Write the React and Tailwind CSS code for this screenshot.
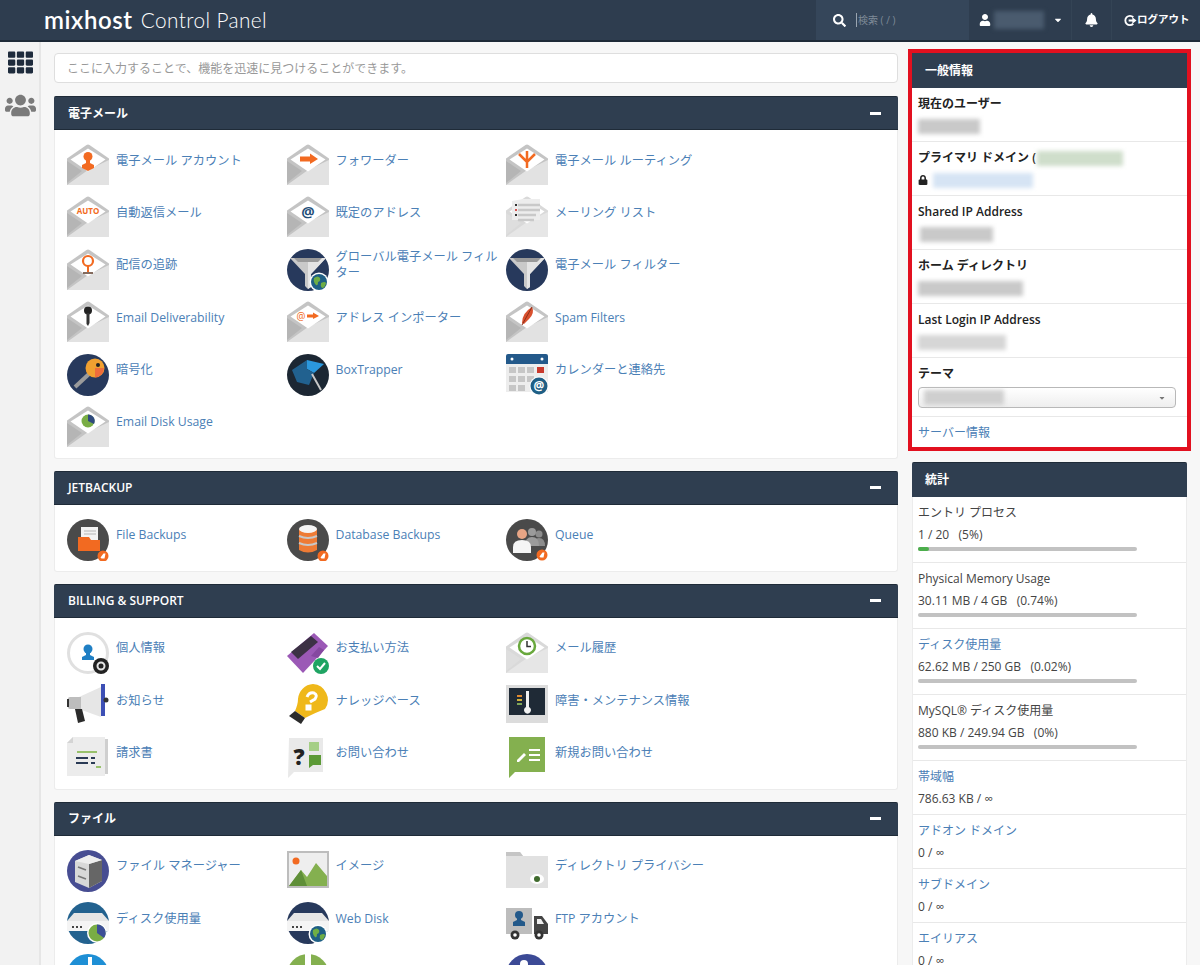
import { FaBell, FaCaretDown, FaLock, FaSearch, FaTh, FaUser, FaUsers } from 'react-icons/fa';

const ORANGE = '#f26a21';
const NAVY = '#27395c';

function Svg({ children }) {
  return <svg viewBox="0 0 42 42" className="w-[42px] h-[42px] shrink-0 block">{children}</svg>;
}

function Envelope({ children, light }) {
  return (
    <Svg>
      <path d="M19.500 1 Q21 0 22.500 1 L42 14.500 V41 H0 V14.500Z" fill={light ? '#d9d9d9' : '#c4c4c4'} />
      <path d="M0 17 L15 27 L0 39Z" fill={light ? '#dedede' : '#b5b5b5'} />
      <path d="M0 41 L21 26 L42 16 V41Z" fill={light ? '#e6e6e6' : '#e2e2e2'} />
      <path d="M21 4.500 L38.500 15.500 L21 27.500 L3.500 15.500Z" fill="#fff" />
      {children}
    </Svg>
  );
}

function Globe({ cx = 32, cy = 33, r = 8 }) {
  return (
    <g>
      <circle cx={cx} cy={cy} r={r + 1.500} fill="#fff" />
      <circle cx={cx} cy={cy} r={r} fill="#1f5f85" />
      <path d={`M${cx - 5} ${cy - 4} q4 -3 6 0 q1 3 -2 4 q0 4 -2 3 q-3 -3 -2 -7Z M${cx + 2} ${cy + 1} q4 -2 5 0 q-1 5 -4 5 q-2 -2 -1 -5Z`} fill="#6fae45" />
    </g>
  );
}

function Funnel({ globe }) {
  return (
    <Svg>
      <circle cx="21" cy="21" r="21" fill={NAVY} />
      <path d="M3 9 H39 L24 25 V38 L21 40 L18 37 V25Z" fill="#c9c9c9" />
      <path d="M21 9 H39 L24 25 V38 L21 40Z" fill="#e4e4e4" />
      <path d="M7 9 H35 L31 13 H11Z" fill="#9a9a9a" />
      {globe && <Globe />}
    </Svg>
  );
}

function Badge({ cx = 36, cy = 37 }) {
  return (
    <g>
      <circle cx={cx} cy={cy} r="5.500" fill={ORANGE} />
      <path d={`M${cx - 2.500} ${cy + 1.500} l3 -4 h2 l-1 5 h-3Z`} fill="#fff" />
    </g>
  );
}

function Server({ bg, children }) {
  return (
    <Svg>
      <circle cx="21" cy="21" r="21" fill={bg} />
      <path d="M0 19 L7 11 H35 L42 19 V29 H0Z" fill="#e6e6e6" />
      <path d="M0 19 H42 V29 H0Z" fill="#f4f4f4" />
      <path d="M5 24 h2 v2 h-2Z M9 24 h2 v2 h-2Z M13 24 h2 v2 h-2Z" fill="#444" />
      {children}
    </Svg>
  );
}

const icons = {
  account: <Envelope><circle cx="21" cy="12.500" r="4.500" fill={ORANGE} /><path d="M19 15 h4 v4 l4 2 v3 l-6 3 l-6 -3 v-3 l4 -2Z" fill={ORANGE} /></Envelope>,
  forwarder: <Envelope><path d="M13 12.500 H23 V9.500 L31 15 L23 20 V17.500 H13Z" fill={ORANGE} /></Envelope>,
  routing: <Envelope><path d="M21 7 V24 M13 10 L21 18 L29 10" stroke={ORANGE} strokeWidth="2.500" fill="none" /></Envelope>,
  auto: <Envelope><text x="21" y="18" textAnchor="middle" fontSize="8" fontWeight="700" fill={ORANGE} fontFamily="Open Sans">AUTO</text></Envelope>,
  at: <Envelope><text x="21" y="21" textAnchor="middle" fontSize="15" fontWeight="700" fill="#1f4e79" fontFamily="Open Sans">@</text></Envelope>,
  list: (
    <Envelope light>
      <path d="M6 5 L17 3 H34 V24 H6Z" fill="#ededed" />
      <path d="M12 9 H34 M12 14 H34 M12 19 H30 M12 24 H28" stroke="#c9c9c9" strokeWidth="2.500" />
      <path d="M9 8 h2 v2 h-2Z M9 18 h2 v2 h-2Z" fill="#333" />
      <path d="M9 13 h2 v2 h-2Z" fill="#d9534f" />
    </Envelope>
  ),
  track: <Envelope><circle cx="21" cy="12" r="5" fill="#fff" stroke={ORANGE} strokeWidth="2.200" /><path d="M21 17 V23" stroke={ORANGE} strokeWidth="2" /><path d="M16 24 H26" stroke="#5b3a29" strokeWidth="1.500" /></Envelope>,
  globalFilter: <Funnel globe />,
  filter: <Funnel />,
  key: <Envelope><circle cx="21" cy="9.500" r="4" fill="#222" /><path d="M19.500 12 h3 V22 L21 25 L19.500 23Z" fill="#333" /></Envelope>,
  importer: (
    <Envelope>
      <text x="14" y="19" textAnchor="middle" fontSize="10" fill={ORANGE} fontFamily="Open Sans">@</text>
      <path d="M20 13.500 H26 V11.500 L32 15 L26 18 V16.500 H20Z" fill={ORANGE} />
    </Envelope>
  ),
  spam: <Envelope><path d="M26 6 Q29 12 23 18 L18 23 L16 22 Q16 12 26 6Z" fill="#d9502e" /><path d="M26 6 L16 24" stroke="#8c2f1a" strokeWidth="1" /></Envelope>,
  crypt: (
    <Svg>
      <circle cx="21" cy="21" r="21" fill={NAVY} />
      <path d="M8 33 L22 20" stroke="#9b9b9b" strokeWidth="4" />
      <circle cx="28" cy="14" r="9.500" fill="#f0a030" />
      <path d="M28 14 L37 14 A9.500 9.500 0 0 1 28 23.500Z" fill="#ee6c3b" />
      <circle cx="31" cy="11" r="2" fill="#222" />
    </Svg>
  ),
  boxtrapper: (
    <Svg>
      <circle cx="21" cy="21" r="21" fill="#1c2733" />
      <path d="M20 6 L37 10 L27 19 L20 15Z" fill="#2b98dd" />
      <path d="M5 16 L20 6 L20 15 L27 19 L22 31 L10 28Z" fill="#21618f" />
      <path d="M25 20 L34 36" stroke="#c8c8c8" strokeWidth="2" />
    </Svg>
  ),
  calendar: (
    <Svg>
      <path d="M2 0 H40 Q42 0 42 2 V10 H0 V2 Q0 0 2 0Z" fill="#23598a" />
      <path d="M0 10 H42 V38 H0Z" fill="#ededed" />
      <path d="M3 13 h7 v6 h-7Z M12 13 h7 v6 h-7Z M21 13 h7 v6 h-7Z M3 22 h7 v6 h-7Z M12 22 h7 v6 h-7Z M21 22 h7 v6 h-7Z M3 31 h7 v6 h-7Z M12 31 h7 v6 h-7Z" fill="#c6c6c6" />
      <path d="M31 13 h7 v6 h-7Z" fill="#c9392c" />
      <circle cx="6" cy="5" r="1.500" fill="#fff" /><circle cx="36" cy="5" r="1.500" fill="#fff" />
      <circle cx="33" cy="32" r="9.500" fill="#fff" /><circle cx="33" cy="32" r="8.500" fill="#1f5f85" />
      <text x="33" y="36" textAnchor="middle" fontSize="12" fontWeight="700" fill="#fff" fontFamily="Open Sans">@</text>
    </Svg>
  ),
  diskUsage: <Envelope><circle cx="21" cy="15" r="6.500" fill="#79ad45" /><path d="M21 15 V8.500 A6.500 6.500 0 0 1 27 18Z" fill="#2f4a7d" /></Envelope>,
  fileBackup: (
    <Svg>
      <circle cx="21" cy="21" r="21" fill="#4a4a4a" />
      <path d="M14 8 H31 V22 H14Z" fill="#f3f3f3" />
      <path d="M17 12 H29 M17 15 H29" stroke="#b5b5b5" />
      <path d="M11 18 H22 L24 21 H33 V32 H11Z" fill={ORANGE} />
      <Badge />
    </Svg>
  ),
  dbBackup: (
    <Svg>
      <circle cx="21" cy="21" r="21" fill="#4a4a4a" />
      <path d="M12 10 H30 V31 Q21 36 12 31Z" fill="#ee7b35" />
      <ellipse cx="21" cy="10" rx="9" ry="4" fill="#f5f5f5" />
      <path d="M12 17 Q21 21 30 17 M12 24 Q21 28 30 24" stroke="#c8c8c8" strokeWidth="2" fill="none" />
      <Badge />
    </Svg>
  ),
  queue: (
    <Svg>
      <circle cx="21" cy="21" r="21" fill="#4a4a4a" />
      <circle cx="33" cy="15" r="3.500" fill="#8c8c8c" /><path d="M27 27 Q27 19 33 19 Q39 19 39 27Z" fill="#8c8c8c" />
      <circle cx="26" cy="13" r="4" fill="#9b9b9b" /><path d="M19 27 Q19 18 26 18 Q33 18 33 27Z" fill="#9b9b9b" />
      <circle cx="16" cy="15" r="5" fill="#e8a585" /><path d="M7 34 V28 Q7 21 16 21 Q25 21 25 28 V34Z" fill="#f5f5f5" />
      <Badge cx={36} cy={36} />
    </Svg>
  ),
  personal: (
    <Svg>
      <circle cx="21" cy="21" r="19.500" fill="#fff" stroke="#e0e0e0" strokeWidth="3" />
      <circle cx="21" cy="17" r="4.500" fill="#1f7fc4" />
      <path d="M19 20 h4 v3 l4 2 v3 h-12 v-3 l4 -2Z" fill="#1f7fc4" />
      <circle cx="34" cy="34" r="8" fill="#222" />
      <circle cx="34" cy="34" r="3.500" fill="none" stroke="#e4e4e4" strokeWidth="2" />
    </Svg>
  ),
  payment: (
    <Svg>
      <path d="M0 24 L27 1 L41 14 L16 41Z" fill="#9b59b6" />
      <path d="M4 20 L24 4 L31 10 L11 27Z" fill="#3c3145" />
      <path d="M24 24 L32 15 L37 18 L31 26Z" fill="#8548a0" />
      <circle cx="34" cy="34" r="8" fill="#1fa463" />
      <path d="M30 34 l3 3 l5 -6" stroke="#fff" strokeWidth="2" fill="none" />
    </Svg>
  ),
  mailHistory: (
    <Envelope light>
      <circle cx="21" cy="14" r="8" fill="#fff" stroke="#69a83d" strokeWidth="2.500" />
      <path d="M21 9 V14.500 H25" stroke="#333" strokeWidth="1.500" fill="none" />
    </Envelope>
  ),
  news: (
    <Svg>
      <path d="M4 13 H12 L34 3 V33 L12 25 H4Z" fill="#e6e6e6" />
      <path d="M1 15 Q1 13 3 13 H14 V25 H3 Q1 25 1 23Z" fill="#bdbdbd" />
      <path d="M0 15 h2 v8 h-2Z" fill="#333" />
      <path d="M8 25 H15 L18 37 L11 39Z" fill="#2b2b2b" />
      <path d="M34 0 h4 v32 h-4Z" fill="#3d4fb5" />
      <circle cx="39" cy="16" r="2.500" fill="#333" />
    </Svg>
  ),
  knowledge: (
    <Svg>
      <path d="M26 0 A16 16 0 0 1 38 25 Q30 28 18 34 L8 27 Q11 20 11 15 A16 16 0 0 1 26 0Z" fill="#efb81a" />
      <path d="M20 13 Q22 8 27 9 Q31 11 28 15 L23 18 M20 22 h3 v3 h-3Z" stroke="#fff" strokeWidth="3" fill="none" />
      <path d="M8 27 L18 34 L14 40 L2 32Z" fill="#2b2b2b" />
    </Svg>
  ),
  status: (
    <Svg>
      <path d="M0 1 H42 V39 H0Z" fill="#dcdcdc" />
      <path d="M3 4 H39 V31 H3Z" fill="#1f2a36" />
      <path d="M20 7 h3 v16 a3.500 3.500 0 1 1 -3 0Z" fill="#f2f2f2" />
      <path d="M11 11 h5 v2 h-5Z" fill="#e0892e" /><path d="M11 15 h5 v2 h-5Z" fill="#d1b23a" /><path d="M11 19 h5 v2 h-5Z" fill="#7fa65a" />
    </Svg>
  ),
  invoice: (
    <Svg>
      <path d="M6 0 H38 V39 H0 V6Z" fill="#ececec" />
      <path d="M38 2 h3 v35 h-3Z" fill="#cfcfcf" />
      <path d="M0 6 H6 V0Z" fill="#d4d4d4" />
      <path d="M10 15 H30" stroke="#7cb342" strokeWidth="1.500" />
      <path d="M9 21 H21 M9 26 H21 M24 21 H28 M24 26 H28" stroke="#2a3a55" strokeWidth="2" />
      <path d="M29 30 H34" stroke="#7cb342" strokeWidth="1.500" />
    </Svg>
  ),
  question: (
    <Svg>
      <path d="M2 1 H36 V35 H7 L1 41Z" fill="#e9e9e9" />
      <text x="12" y="28" textAnchor="middle" fontSize="22" fontWeight="800" fill="#222" fontFamily="Open Sans">?</text>
      <path d="M22 5 H32 V14 H22Z" fill="#a5cf86" />
      <path d="M22 18 H34 V28 H26 L22 31Z" fill="#5c9a36" />
    </Svg>
  ),
  ticket: (
    <Svg>
      <path d="M3 0 H39 V35 H9 L3 41Z" fill="#84b04f" />
      <path d="M11 23 L18 16 L20 18 L13 25 H11Z" fill="#fff" />
      <path d="M23 13 H34 M23 18 H34 M23 23 H34" stroke="#fff" strokeWidth="2.200" />
    </Svg>
  ),
  fileManager: (
    <Svg>
      <circle cx="21" cy="21" r="21" fill="#474d92" />
      <path d="M8 11 L22 5 L35 10 V31 L22 38 L8 32Z" fill="#d8d8d8" />
      <path d="M22 14 L35 10 V31 L22 38Z" fill="#666" />
      <path d="M8 11 L22 5 L35 10 L22 14Z" fill="#eee" />
      <path d="M11 17 L19 20 M11 26 L19 29" stroke="#777" strokeWidth="1.500" />
    </Svg>
  ),
  image: (
    <Svg>
      <path d="M0 1 H42 V38 H0Z" fill="#bdbdbd" />
      <path d="M2 3 H40 V36 H2Z" fill="#eeeeee" />
      <circle cx="9" cy="11" r="3.500" fill="#f26a21" />
      <path d="M2 36 L14 20 L20 27 L29 13 L40 26 V36Z" fill="#84b04f" />
      <path d="M2 36 L14 20 L20 36Z" fill="#5f8f38" />
    </Svg>
  ),
  privacy: (
    <Svg>
      <path d="M0 2 H14 L17 6 H42 V38 H0Z" fill="#e1e1e1" />
      <path d="M0 2 H14 L17 6 H0Z" fill="#c5c5c5" />
      <ellipse cx="31" cy="29" rx="7" ry="5" fill="#fff" />
      <circle cx="31" cy="29" r="3" fill="#3f6a2d" />
    </Svg>
  ),
  disk: <Server bg="#23628f"><circle cx="30" cy="31" r="10" fill="#fff" /><circle cx="30" cy="31" r="8.500" fill="#79ad45" /><path d="M30 31 V22.500 A8.500 8.500 0 0 1 37 36Z" fill="#3c4f96" /></Server>,
  webDisk: <Server bg={NAVY}><Globe cx={31} cy={32} r={8} /></Server>,
  ftp: (
    <Svg>
      <path d="M0 6 H26 V32 H0Z" fill="#bdbdbd" />
      <circle cx="13" cy="13" r="4" fill="#23598a" />
      <path d="M11 16 h4 v2 l4 2 v4 h-12 v-4 l4 -2Z" fill="#23598a" />
      <path d="M28 14 H36 L42 22 V32 H28Z" fill="#444" />
      <path d="M31 17 H35 L38 22 H31Z" fill="#eee" />
      <circle cx="9" cy="33" r="4.500" fill="#333" /><circle cx="9" cy="33" r="1.800" fill="#fff" />
      <circle cx="33" cy="33" r="4.500" fill="#333" /><circle cx="33" cy="33" r="1.800" fill="#fff" />
    </Svg>
  ),
  backup: <Svg><circle cx="21" cy="21" r="21" fill="#1e8fd5" /><path d="M21 3 h4 v8 h-4Z" fill="#fff" /></Svg>,
  ssh: <Svg><circle cx="21" cy="21" r="21" fill="#84b04f" /><path d="M18 0 h6 v14 h-6Z" fill="#fff" /></Svg>,
  git: <Svg><circle cx="21" cy="21" r="21" fill="#3c4a96" /><circle cx="18" cy="10" r="4" fill="#fff" /></Svg>,
};

const sections = [
  {
    title: '電子メール',
    items: [
      ['電子メール アカウント', 'account'], ['フォワーダー', 'forwarder'], ['電子メール ルーティング', 'routing'],
      ['自動返信メール', 'auto'], ['既定のアドレス', 'at'], ['メーリング リスト', 'list'],
      ['配信の追跡', 'track'], ['グローバル電子メール フィルター', 'globalFilter'], ['電子メール フィルター', 'filter'],
      ['Email Deliverability', 'key'], ['アドレス インポーター', 'importer'], ['Spam Filters', 'spam'],
      ['暗号化', 'crypt'], ['BoxTrapper', 'boxtrapper'], ['カレンダーと連絡先', 'calendar'],
      ['Email Disk Usage', 'diskUsage'],
    ],
  },
  {
    title: 'JETBACKUP',
    items: [['File Backups', 'fileBackup'], ['Database Backups', 'dbBackup'], ['Queue', 'queue']],
  },
  {
    title: 'BILLING & SUPPORT',
    items: [
      ['個人情報', 'personal'], ['お支払い方法', 'payment'], ['メール履歴', 'mailHistory'],
      ['お知らせ', 'news'], ['ナレッジベース', 'knowledge'], ['障害・メンテナンス情報', 'status'],
      ['請求書', 'invoice'], ['お問い合わせ', 'question'], ['新規お問い合わせ', 'ticket'],
    ],
  },
  {
    title: 'ファイル',
    items: [
      ['ファイル マネージャー', 'fileManager'], ['イメージ', 'image'], ['ディレクトリ プライバシー', 'privacy'],
      ['ディスク使用量', 'disk'], ['Web Disk', 'webDisk'], ['FTP アカウント', 'ftp'],
      ['', 'backup'], ['', 'ssh'], ['', 'git'],
    ],
  },
];

// redacted values in the reference are blurred smudges
function Smudge({ width, color = 'bg-[#c9c9c9]', className = '' }) {
  return <div style={{ width }} className={`h-[15px] blur-[2px] ${color} ${className}`} />;
}

function Section({ title, items }) {
  return (
    <section className="mb-[11.600px] bg-white border-x border-b border-[#ececec] rounded-b-[3px]">
      <div className="-mx-px h-[34px] flex items-center justify-between pl-[14px] pr-[17px] bg-[#2f3e50] border-y border-[#1f2b38] rounded-t-[2px] text-white text-[12px] font-semibold">
        <span className="pt-px">{title}</span>
        <span className="w-[11px] h-[3px] bg-white" />
      </div>
      <div className="pl-[12px] pt-[14px] grid grid-cols-[repeat(3,219.500px)] auto-rows-[52.400px]">
        {items.map(([label, icon]) => (
          <a key={icon} className="flex items-start gap-[7px] text-[#4b80b6] text-[12.250px] leading-[16px]">
            {icons[icon]}
            <span className="h-[33px] w-[165px] flex items-center">{label}</span>
          </a>
        ))}
      </div>
    </section>
  );
}

function InfoRow({ label, children, last }) {
  return (
    <div className={`px-[6px] pt-[6px] pb-[5px] ${last ? '' : 'border-b border-[#e8e8e8]'}`}>
      <div className="h-[20px] leading-[20px] font-semibold text-[#222]">{label}</div>
      <div className="mt-[2px] h-[20px] flex items-center">{children}</div>
    </div>
  );
}

function Bar({ percent }) {
  return (
    <div className="mt-[2px] mb-[11px] w-[219px] h-[4px] rounded-sm bg-[#c2c2c2]">
      {percent > 0 && <div style={{ width: `${percent}%` }} className="h-full rounded-sm bg-[#4cae4c]" />}
    </div>
  );
}

function StatRow({ label, value, link, percent }) {
  const hasBar = percent !== undefined;
  return (
    <div className={`px-[5px] pt-[6px] border-b border-[#e8e8e8] ${hasBar ? '' : 'pb-[5px]'}`}>
      <div className={`h-[20px] leading-[20px] ${link ? 'text-[#4b80b6]' : 'text-[#444]'}`}>{label}</div>
      <div className="mt-[2px] h-[20px] leading-[20px] text-[#444] whitespace-pre">{value}</div>
      {hasBar && <Bar percent={percent} />}
    </div>
  );
}

export default function App() {
  return (
    <div className="w-[1200px] h-[965px] overflow-hidden bg-[#f7f7f7] font-['Open_Sans','Noto_Sans_CJK_JP',sans-serif] text-[12px]">
      <header className="h-[42px] flex bg-[#2e3d4f] border-b-2 border-[#1e2a38] text-white">
        <div className="w-[816px] pl-[44px] flex items-center whitespace-nowrap">
          <span className="font-['Lato',sans-serif] text-[24px] font-semibold leading-none tracking-[0.6px]">mixhost</span>
          <span className="ml-[8px] font-['Lato',sans-serif] text-[20.800px] font-light leading-none tracking-[0.4px]">Control Panel</span>
        </div>
        <div className="w-[153px] bg-[#35465a] flex items-center pl-[17px]">
          <FaSearch className="w-[13px] h-[13px]" />
          <span className="ml-[10px] w-px h-[14px] bg-[#9aa5b1]" />
          <span className="ml-px text-[10px] text-[#7f8b98]">検索 ( / )</span>
        </div>
        <div className="w-[103px] flex items-center pl-[10px] border-r border-[#344455]">
          <FaUser className="w-[12px] h-[12px]" />
          <div className="ml-[3px] w-[50px] h-[18px] bg-[#4a5b6e] blur-[2px]" />
          <FaCaretDown className="ml-[9px] w-[10px] h-[10px]" />
        </div>
        <div className="w-[40px] flex items-center justify-center border-r border-[#344455]">
          <FaBell className="w-[13px] h-[14px]" />
        </div>
        <div className="flex-1 flex items-center pl-[12px] text-[10.500px] font-semibold">
          <svg viewBox="0 0 14 14" className="w-[13px] h-[13px]">
            <path d="M10 3.500 A5 5 0 1 0 10 10.500" stroke="#fff" strokeWidth="2" fill="none" />
            <path d="M5 5.800 H9 V3.500 L13.500 7 L9 10.500 V8.200 H5Z" fill="#fff" />
          </svg>
          <span>ログアウト</span>
        </div>
      </header>

      <div className="flex">
        <aside className="w-[41px] h-[923px] shrink-0 flex flex-col items-center pt-[8px] pl-[2px] bg-[#f2f2f2] border-r-2 border-[#e6e6e6]">
          <FaTh className="w-[25px] h-[25px] text-[#1e2b3c]" />
          <FaUsers className="mt-[14.500px] w-[31px] h-[31px] text-[#7a7a7a]" />
        </aside>

        <main className="w-[844px] ml-[13px] pt-[11px] shrink-0">
          <div className="h-[30px] mb-[13px] flex items-center pl-[12px] pt-px bg-white border border-[#dedede] rounded-[4px] text-[#999]">
            ここに入力することで、機能を迅速に見つけることができます。
          </div>
          {sections.map((s) => <Section key={s.title} {...s} />)}
        </main>

        <div className="w-[275px] ml-[14px] pt-[11px] shrink-0">
          <section className="bg-white outline-4 outline-[#e2101f]">
            <div className="h-[35px] flex items-center pl-[13px] bg-[#2f3e50] text-white font-semibold">一般情報</div>
            <InfoRow label="現在のユーザー"><Smudge width={62} /></InfoRow>
            <div className="px-[6px] pt-[6px] pb-[5px] border-b border-[#e8e8e8]">
              <div className="h-[20px] leading-[20px] font-semibold text-[#222] flex items-center">
                プライマリ ドメイン (
                <Smudge width={86} color="bg-[#cfdecb]" className="ml-px" />
              </div>
              <div className="mt-[2px] h-[20px] flex items-center">
                <FaLock className="w-[10px] h-[10px] text-[#222]" />
                <Smudge width={100} color="bg-[#d6e4f4]" className="ml-[5px]" />
              </div>
            </div>
            <InfoRow label="Shared IP Address"><Smudge width={73} className="ml-[2px]" /></InfoRow>
            <InfoRow label="ホーム ディレクトリ"><Smudge width={105} /></InfoRow>
            <InfoRow label="Last Login IP Address"><Smudge width={88} color="bg-[#d6d6d6]" /></InfoRow>
            <div className="px-[6px] pt-[6px] pb-[8px] border-b border-[#e8e8e8]">
              <div className="h-[20px] leading-[20px] font-semibold text-[#222]">テーマ</div>
              <div className="mt-[3px] w-[258px] h-[21px] flex items-center justify-between pl-[5px] pr-[9px] rounded-[4px] border border-[#b8b8b8] bg-linear-to-b from-white to-[#eeeeee]">
                <Smudge width={80} color="bg-[#cfcfcf]" />
                <FaCaretDown className="w-[8px] h-[8px] text-[#777]" />
              </div>
            </div>
            <div className="h-[30px] flex items-center px-[6px] pt-px text-[#4b80b6]">サーバー情報</div>
          </section>

          <section className="mt-[15px] bg-white border-x border-[#ececec]">
            <div className="-mx-px h-[35px] flex items-center pl-[13px] bg-[#2f3e50] border-t border-[#1f2b38] rounded-t-[2px] text-white font-semibold">統計</div>
            <StatRow label="エントリ プロセス" value="1 / 20   (5%)" percent={5} />
            <StatRow label="Physical Memory Usage" value="30.11 MB / 4 GB   (0.74%)" percent={0} />
            <StatRow label="ディスク使用量" value="62.62 MB / 250 GB   (0.02%)" percent={0} link />
            <StatRow label="MySQL® ディスク使用量" value="880 KB / 249.94 GB   (0%)" percent={0} />
            <StatRow label="帯域幅" value="786.63 KB / ∞" link />
            <StatRow label="アドオン ドメイン" value="0 / ∞" link />
            <StatRow label="サブドメイン" value="0 / ∞" link />
            <StatRow label="エイリアス" value="0 / ∞" link />
          </section>
        </div>
      </div>
    </div>
  );
}
